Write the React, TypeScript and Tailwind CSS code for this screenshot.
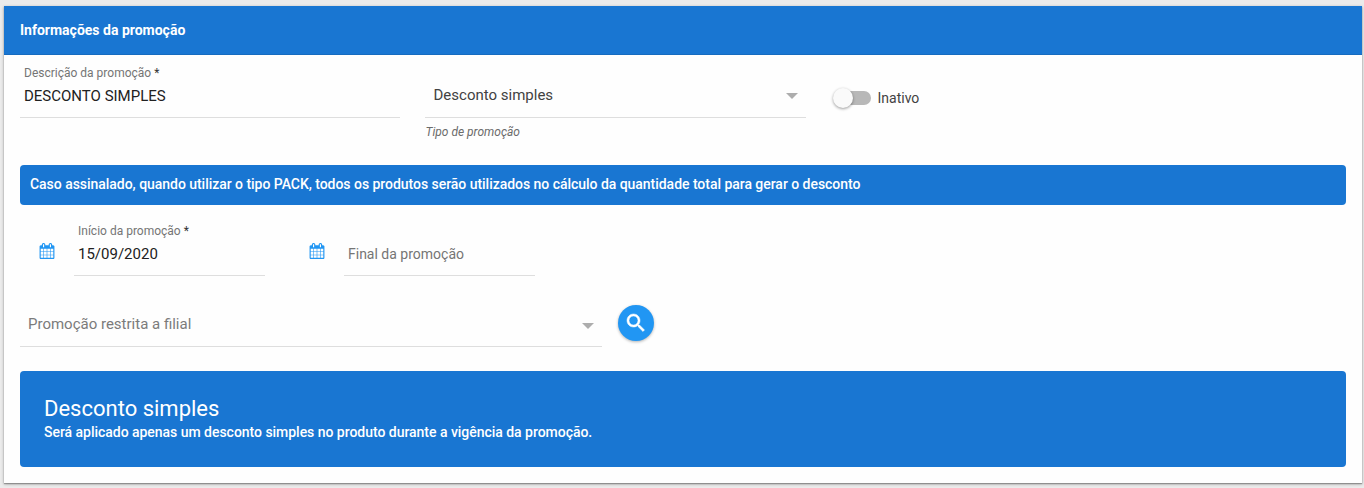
import React from "react";

function CalendarIcon() {
  return (
    <svg viewBox="0 0 1664 1792" className="h-4 w-4 shrink-0 fill-[#2196f3]">
      <path d="M128 1664h288v-288h-288v288zm352 0h320v-288h-320v288zm-352-352h288v-320h-288v320zm352 0h320v-320h-320v320zm-352-384h288v-288h-288v288zm736 736h320v-288h-320v288zm-384-736h320v-288h-320v288zm768 736h288v-288h-288v288zm-384-352h320v-320h-320v320zm-352-864v-288q0-13-9.5-22.5t-22.5-9.5h-64q-13 0-22.5 9.5t-9.5 22.5v288q0 13 9.5 22.5t22.5 9.5h64q13 0 22.5-9.5t9.5-22.5zm736 864h288v-320h-288v320zm-384-384h320v-288h-320v288zm384 0h288v-288h-288v288zm32-480v-288q0-13-9.5-22.5t-22.5-9.5h-64q-13 0-22.5 9.5t-9.5 22.5v288q0 13 9.5 22.5t22.5 9.5h64q13 0 22.5-9.5t9.5-22.5zm384-64v1280q0 52-38 90t-90 38h-1408q-52 0-90-38t-38-90v-1280q0-52 38-90t90-38h128v-96q0-66 47-113t113-47h64q66 0 113 47t47 113v96h384v-96q0-66 47-113t113-47h64q66 0 113 47t47 113v96h128q52 0 90 38t38 90z" />
    </svg>
  );
}

function SelectArrow() {
  return (
    <svg viewBox="0 0 12 6" className="h-[6px] w-3 shrink-0 fill-[#adadad]">
      <path d="M0 0h12L6 6z" />
    </svg>
  );
}

function SearchButton() {
  return (
    <button className="ml-4 flex size-9 items-center justify-center rounded-full bg-[#2196f3] shadow-[0_1px_3px_rgba(0,0,0,0.3)]">
      <svg viewBox="0 0 24 24" className="size-6 fill-white">
        <path d="M15.5 14h-.79l-.28-.27C15.41 12.59 16 11.11 16 9.5 16 5.91 13.09 3 9.5 3S3 5.91 3 9.5 5.91 16 9.5 16c1.61 0 3.09-.59 4.23-1.57l.27.28v.79l5 4.99L20.49 19l-4.99-5zm-6 0C7.01 14 5 11.99 5 9.5S7.01 5 9.5 5 14 7.01 14 9.5 11.99 14 9.5 14z" stroke="white" strokeWidth="0.5" />
      </svg>
    </button>
  );
}

function FieldLabel({ children }: { children: React.ReactNode }) {
  return (
    <span className="text-[12px] leading-4 text-[#757575]">
      {children} <span className="text-[#333]">*</span>
    </span>
  );
}

export default function App() {
  return (
    <div className="h-[488px] bg-[#ebebeb] pt-[6px] pr-[2px] pl-1 font-[Roboto,sans-serif] text-sm">
      <main className="flex h-[477px] flex-col bg-[#fefefe] shadow-[0_1px_3px_rgba(0,0,0,0.3),0_1px_1px_rgba(0,0,0,0.25)]">
        <header className="flex h-[49px] shrink-0 items-center border-b border-[#166bbf] bg-[#1976d2] px-4 font-bold text-white">
          Informações da promoção
        </header>

        <section className="flex h-[110px] shrink-0 pl-4">
          <div className="flex h-[63px] w-[380px] flex-col border-b border-[#dedede] pt-[10px] pl-1">
            <FieldLabel>Descrição da promoção</FieldLabel>
            <span className="mt-[5px] text-[15px] leading-5 text-[#212121]">DESCONTO SIMPLES</span>
          </div>

          <div className="ml-[25px] w-[381px]">
            <div className="flex h-[63px] items-center justify-between border-b border-[#dedede] pt-[20px] pr-[8px] pl-[8.5px]">
              <span className="text-[15px] text-[#424242]">Desconto simples</span>
              <SelectArrow />
            </div>
            <p className="mt-[6px] pl-[0.5px] text-[12px] leading-4 text-[#6b6b6b] italic">Tipo de promoção</p>
          </div>

          <div className="mt-[33px] ml-[28px] flex h-5 items-center">
            <div className="flex h-[14px] w-[37px] items-center rounded-full bg-[#b8b8b8]">
              <span className="-ml-px size-5 rounded-full bg-[#fafafa] shadow-[0_1px_3px_rgba(0,0,0,0.4)]" />
            </div>
            <span className="ml-[6.5px] text-[#424242]">Inativo</span>
          </div>
        </section>

        <div className="mx-4 flex h-10 shrink-0 items-center rounded bg-[#1976d2] px-[10px] pb-[2px] font-medium tracking-[-0.036px] text-white">
          Caso assinalado, quando utilizar o tipo PACK, todos os produtos serão utilizados no cálculo da quantidade total para gerar o desconto
        </div>

        <section className="flex h-[100px] shrink-0 pt-2 pl-[35px]">
          <div className="pt-[30px]"><CalendarIcon /></div>
          <div className="ml-[19px] flex h-[63px] w-[191px] flex-col border-b border-[#dedede] pt-[10px] pl-1">
            <FieldLabel>Início da promoção</FieldLabel>
            <span className="mt-[5px] text-[15px] leading-5 text-[#212121]">15/09/2020</span>
          </div>
          <div className="ml-11 pt-[30px]"><CalendarIcon /></div>
          <div className="ml-[19px] flex h-[63px] w-[191px] items-end border-b border-[#dedede] pb-[11px] pl-1">
            <span className="leading-5 text-[#757575]">Final da promoção</span>
          </div>
        </section>

        <section className="flex h-[66px] shrink-0 pl-4">
          <div className="flex h-[42px] w-[582px] items-center justify-between border-b border-[#dedede] px-2">
            <span className="pb-[2px] text-[15px] text-[#7b7b7b]">Promoção restrita a filial</span>
            <SelectArrow />
          </div>
          <SearchButton />
        </section>

        <section className="mx-4 h-24 shrink-0 rounded bg-[#1976d2] px-6 pt-[25px] text-white">
          <h2 className="text-[22px] leading-[26px]">Desconto simples</h2>
          <p className="leading-5 font-medium tracking-[-0.03px]">Será aplicado apenas um desconto simples no produto durante a vigência da promoção.</p>
        </section>
      </main>
    </div>
  );
}
